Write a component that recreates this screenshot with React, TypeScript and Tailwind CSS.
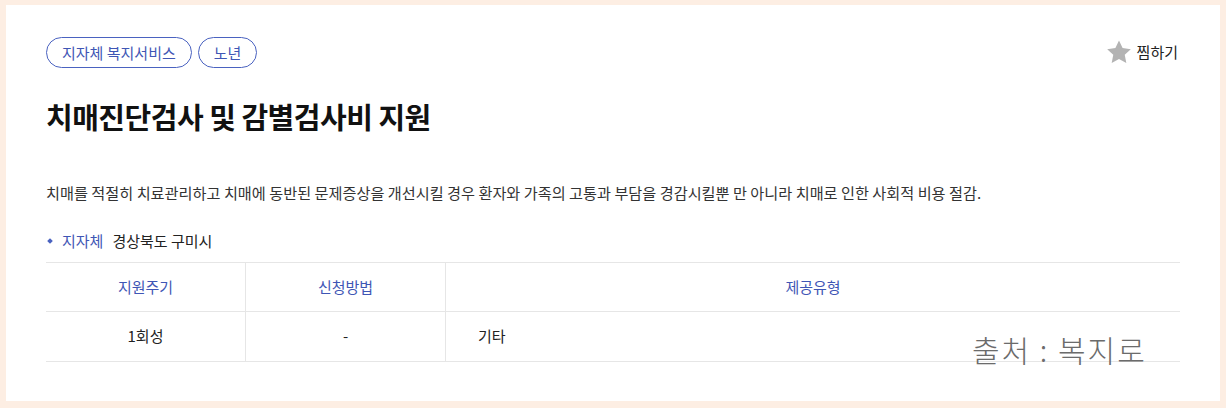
import React from 'react'

const font = { fontFamily: '"Noto Sans CJK KR", "Noto Sans", sans-serif' }

const Tag: React.FC<{ label: string }> = ({ label }) => (
  <span className="h-[31px] px-[15px] flex items-center rounded-full border border-[#4a62c0] text-[15px] text-[#3f56b5] leading-none">
    {label}
  </span>
)

const StarIcon = () => (
  <svg width="28" height="27" viewBox="0 0 24 24">
    <path
      d="M12 1.4l3.2 6.7 7.3.9-5.4 5.1 1.4 7.3L12 17.8l-6.5 3.6 1.4-7.3L1.5 9l7.3-.9z"
      fill="#b3b3b3"
    />
  </svg>
)

export default function App() {
  return (
    <div className="w-[1226px] h-[408px] bg-[#fdeee3] pt-[5px] pl-[6px]" style={font}>
      <div className="relative w-[1214px] h-[396px] bg-white pl-[40px] pr-[40px] pt-[32px]">
        <div className="flex items-start justify-between">
          <div className="flex gap-[6px]">
            <Tag label="지자체 복지서비스" />
            <Tag label="노년" />
          </div>
          <button className="flex items-center gap-[4px] mt-[2px] mr-[2px] text-[15px] text-[#222]">
            <StarIcon />
            <span>찜하기</span>
          </button>
        </div>

        <h1 className="mt-[28px] text-[29px] font-bold text-[#111] leading-[40px] tracking-[-0.5px]">
          치매진단검사 및 감별검사비 지원
        </h1>

        <p className="mt-[44px] text-[15.2px] text-[#333] leading-[24px]">
          치매를 적절히 치료관리하고 치매에 동반된 문제증상을 개선시킬 경우 환자와 가족의 고통과 부담을 경감시킬뿐 만 아니라 치매로 인한 사회적 비용 절감.
        </p>

        <div className="mt-[25px] flex items-center text-[15px] leading-[24px] pb-[9px]">
          <span className="w-[4px] h-[4px] bg-[#4a62c0] rotate-45 ml-[2px] mr-[10px]" />
          <span className="text-[#3f56b5]">지자체</span>
          <span className="ml-[9px] text-[#222]">경상북도 구미시</span>
        </div>

        <div className="border-t border-[#e6e6e6] text-[15px]">
          <div className="grid grid-cols-[200px_200px_1fr] h-[49px] border-b border-[#e6e6e6] text-[#3f56b5]">
            <div className="flex items-center justify-center border-r border-[#e6e6e6]">지원주기</div>
            <div className="flex items-center justify-center border-r border-[#e6e6e6]">신청방법</div>
            <div className="flex items-center justify-center">제공유형</div>
          </div>
          <div className="grid grid-cols-[200px_200px_1fr] h-[50px] border-b border-[#e6e6e6] text-[#222]">
            <div className="flex items-center justify-center border-r border-[#e6e6e6]">1회성</div>
            <div className="flex items-center justify-center border-r border-[#e6e6e6]">-</div>
            <div className="flex items-center pl-[32px]">기타</div>
          </div>
        </div>

        <div className="absolute left-[966px] top-[322px] text-[30px] font-light text-[#6b6b6b] tracking-[2px]">
          출처 : 복지로
        </div>
      </div>
    </div>
  )
}
